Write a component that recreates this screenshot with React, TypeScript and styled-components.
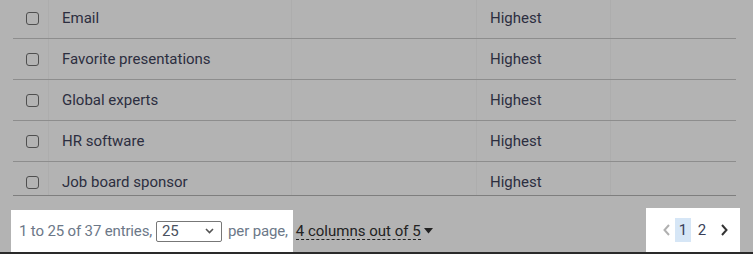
import React from "react";
import styled, { createGlobalStyle } from "styled-components";

const GlobalStyle = createGlobalStyle`
  html, body {
    margin: 0;
    padding: 0;
    background: #b3b3b3;
  }
  body {
    font-family: Roboto, "Liberation Sans", sans-serif;
  }
`;

const Page = styled.div`
  width: 753px;
  height: 254px;
  display: flex;
  flex-direction: column;
  background: #b3b3b3;
  border-bottom: 2px solid #2a2a2a;
  box-sizing: border-box;
  overflow: hidden;
`;

const TableWrap = styled.div`
  margin: 0 17px 0 13px;
  height: 196px;
  overflow: hidden;
  border-bottom: 1px solid #7e7e7e;
  box-sizing: border-box;
`;

const Rows = styled.div`
  margin-top: -2px;
`;

const Row = styled.div`
  display: grid;
  grid-template-columns: 35px 243px 185px 134px 1fr;
  height: 41px;
  border-bottom: 1px solid #8d8d8d;
  box-sizing: border-box;
`;

const Cell = styled.div`
  display: flex;
  align-items: center;
  padding: 0 13px;
  font-size: 15px;
  color: #2c2e40;
  white-space: nowrap;
  & + & {
    border-left: 1px solid #adadad;
  }
`;

const CheckCell = styled(Cell)`
  padding: 0 0 0 13px;
`;

const Box = styled.span`
  width: 13px;
  height: 13px;
  border: 1.5px solid #4f4f4f;
  border-radius: 3px;
  box-sizing: border-box;
`;

const Footer = styled.div`
  flex: 1;
  display: flex;
  justify-content: space-between;
  align-items: flex-end;
  padding: 0 13px 0 11px;
`;

const Left = styled.div`
  display: flex;
  align-items: center;
  height: 42px;
`;

const Summary = styled.div`
  display: flex;
  align-items: center;
  height: 42px;
  padding: 0 5px 0 8px;
  background: #ffffff;
  font-size: 15px;
  color: #6c7888;
  white-space: nowrap;
  letter-spacing: -0.15px;
`;

const Select = styled.div`
  display: flex;
  align-items: center;
  justify-content: space-between;
  width: 66px;
  height: 21px;
  margin: 0 6px 0 4px;
  padding: 0 7px 0 5px;
  border: 1px solid #777;
  border-radius: 2px;
  box-sizing: border-box;
  color: #4a5260;
`;

const Columns = styled.div`
  display: flex;
  align-items: center;
  margin-left: 3px;
  font-size: 15px;
  color: #222;
  white-space: nowrap;
`;

const Dotted = styled.span`
  border-bottom: 1px dashed #222;
  line-height: 16px;
  margin-right: 3px;
`;

const Pager = styled.div`
  display: flex;
  align-items: center;
  height: 44px;
  padding: 0 12px 0 17px;
  background: #ffffff;
`;

const Arrow = styled.span<{ muted?: boolean }>`
  display: flex;
  align-items: center;
  width: ${({ muted }) => (muted ? "12px" : "7px")};
  color: ${({ muted }) => (muted ? "#b0b0b0" : "#333")};
`;

const PageNum = styled.span<{ active?: boolean }>`
  display: flex;
  align-items: center;
  justify-content: center;
  width: ${({ active }) => (active ? "16px" : "8px")};
  height: 24px;
  margin-right: ${({ active }) => (active ? "7px" : "15px")};
  font-size: 15px;
  color: #3a3f58;
  background: ${({ active }) => (active ? "#d6e6f6" : "transparent")};
`;

const rows = ["Email", "Favorite presentations", "Global experts", "HR software", "Job board sponsor"];

export default function App() {
  return (
    <>
      <GlobalStyle />
      <Page>
        <TableWrap>
          <Rows>
            {rows.map((name) => (
              <Row key={name}>
                <CheckCell>
                  <Box />
                </CheckCell>
                <Cell>{name}</Cell>
                <Cell />
                <Cell>Highest</Cell>
                <Cell />
              </Row>
            ))}
          </Rows>
        </TableWrap>
        <Footer>
          <Left>
            <Summary>
              1 to 25 of 37 entries,
              <Select>
                <span>25</span>
                <svg width="9" height="6" viewBox="0 0 9 6">
                  <path d="M1 1l3.5 3.5L8 1" fill="none" stroke="#555" strokeWidth="1.6" />
                </svg>
              </Select>
              per page,
            </Summary>
            <Columns>
              <Dotted>4 columns out of 5</Dotted>
              <svg width="9" height="6" viewBox="0 0 9 6">
                <path d="M0 0h9L4.5 5.5z" fill="#222" />
              </svg>
            </Columns>
          </Left>
          <Pager>
            <Arrow muted>
              <svg width="7" height="12" viewBox="0 0 7 12">
                <path d="M6 1L1.5 6 6 11" fill="none" stroke="currentColor" strokeWidth="2" />
              </svg>
            </Arrow>
            <PageNum active>1</PageNum>
            <PageNum>2</PageNum>
            <Arrow>
              <svg width="7" height="12" viewBox="0 0 7 12">
                <path d="M1 1l4.5 5L1 11" fill="none" stroke="currentColor" strokeWidth="2" />
              </svg>
            </Arrow>
          </Pager>
        </Footer>
      </Page>
    </>
  );
}
